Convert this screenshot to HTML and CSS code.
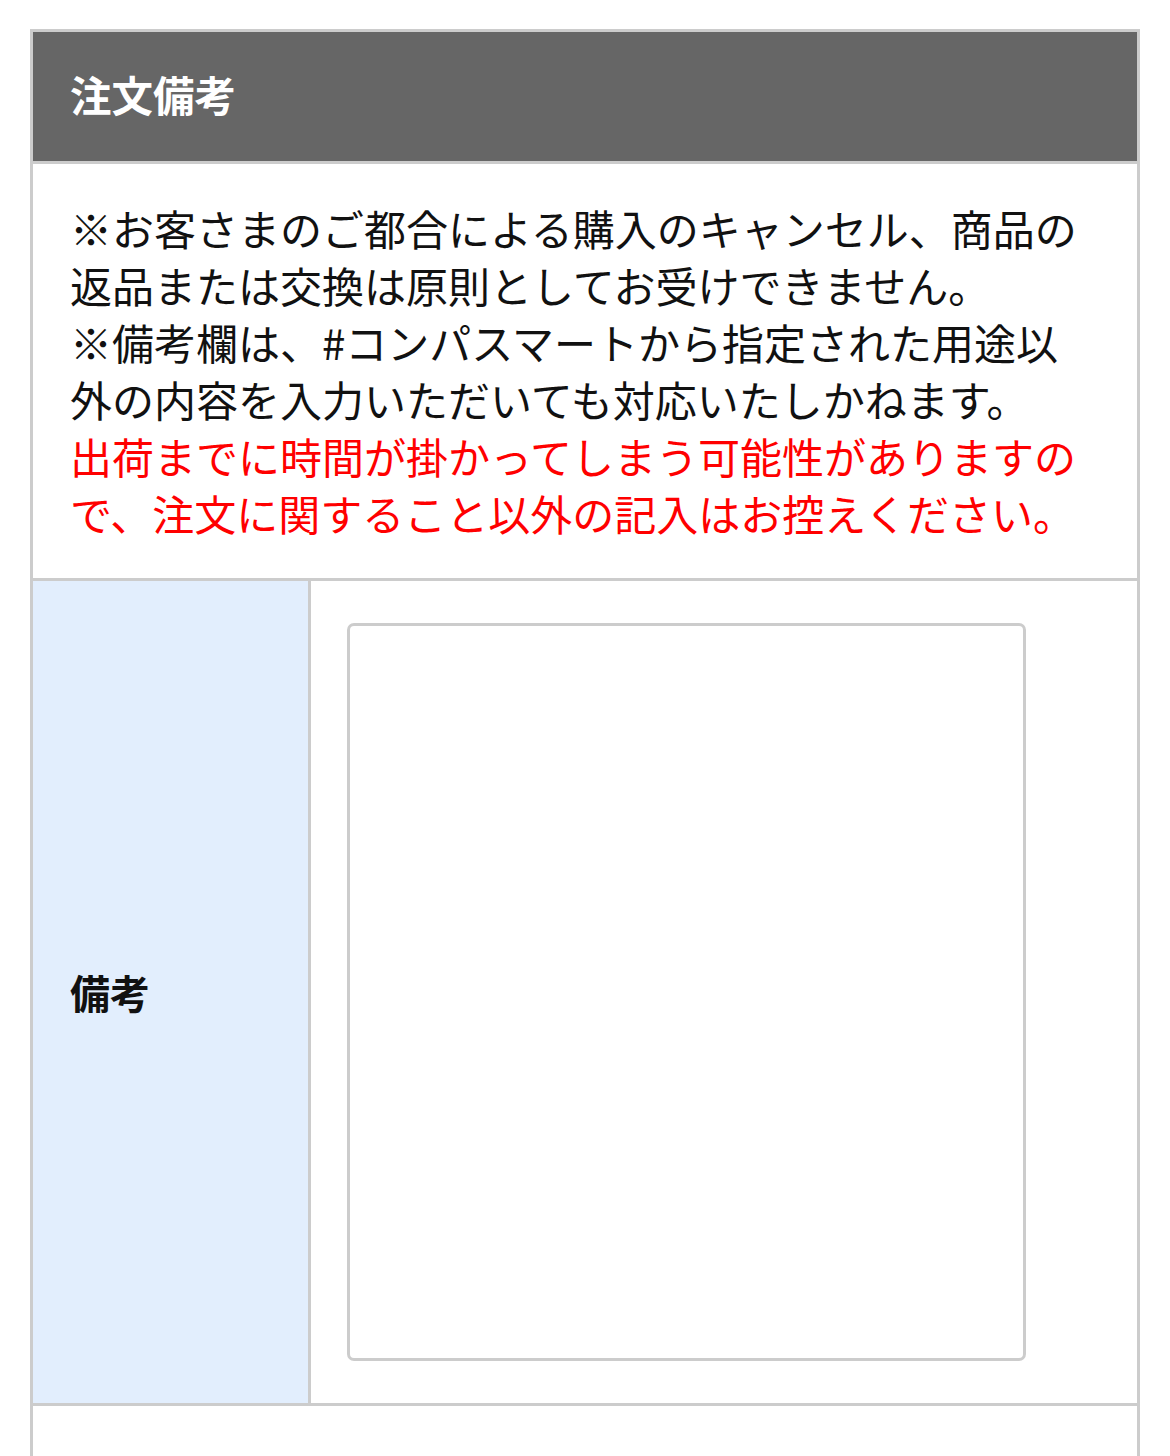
FILE: index.html
```html
<!DOCTYPE html>
<html lang="ja">
<head>
<meta charset="utf-8">
<title>注文備考</title>
<link rel="stylesheet" href="styles.css">
</head>
<body>
<section class="panel">
  <h2 class="panel-title">注文備考</h2>
  <div class="notice">
    <p>※お客さまのご都合による購入のキャンセル、商品の返品または交換は原則としてお受けできません。</p>
    <p>※備考欄は、#コンパスマートから指定された用途以外の内容を入力いただいても対応いたしかねます。</p>
    <p class="warn">出荷までに時間が掛かってしまう可能性がありますので、注文に関すること以外の記入はお控えください。</p>
  </div>
  <div class="row">
    <div class="label">備考</div>
    <div class="field"><textarea class="memo"></textarea></div>
  </div>
  <div class="row row-next"></div>
</section>
</body>
</html>
```
FILE: styles.css
```css
html, body {
  margin: 0;
  padding: 0;
  background: #ffffff;
}
body {
  font-family: "Noto Sans CJK JP", "Noto Sans", sans-serif;
  color: #111111;
}
.panel {
  margin: 29px 30px 0 30px;
  width: 1104px;
  border: 3px solid #cccccc;
  border-bottom: none;
}
.panel-title {
  margin: 0;
  background: #666666;
  color: #ffffff;
  font-size: 41.5px;
  font-weight: 700;
  line-height: 56px;
  padding: 34px 37px 39px;
  border-bottom: 3px solid #cccccc;
}
.notice {
  padding: 35px 52px 37px 37px;
  font-size: 42px;
  line-height: 57px;
  border-bottom: 3px solid #cccccc;
}
.notice p {
  margin: 0;
}
.notice .warn {
  color: #ff0000;
}
.row {
  display: grid;
  grid-template-columns: 278px 1fr;
  border-bottom: 3px solid #cccccc;
}
.label {
  background: #e2eefd;
  border-right: 3px solid #cccccc;
  display: flex;
  align-items: center;
  padding-left: 37px;
  font-size: 40px;
  font-weight: 700;
  color: #111111;
}
.field {
  padding: 42px 36px 42px 36px;
}
.memo {
  display: block;
  box-sizing: border-box;
  width: 679px;
  height: 738px;
  border: 3px solid #cccccc;
  border-radius: 7px;
  resize: none;
  background: #ffffff;
  margin: 0;
  padding: 0;
}
.row-next {
  height: 120px;
  border-bottom: none;
}
```
